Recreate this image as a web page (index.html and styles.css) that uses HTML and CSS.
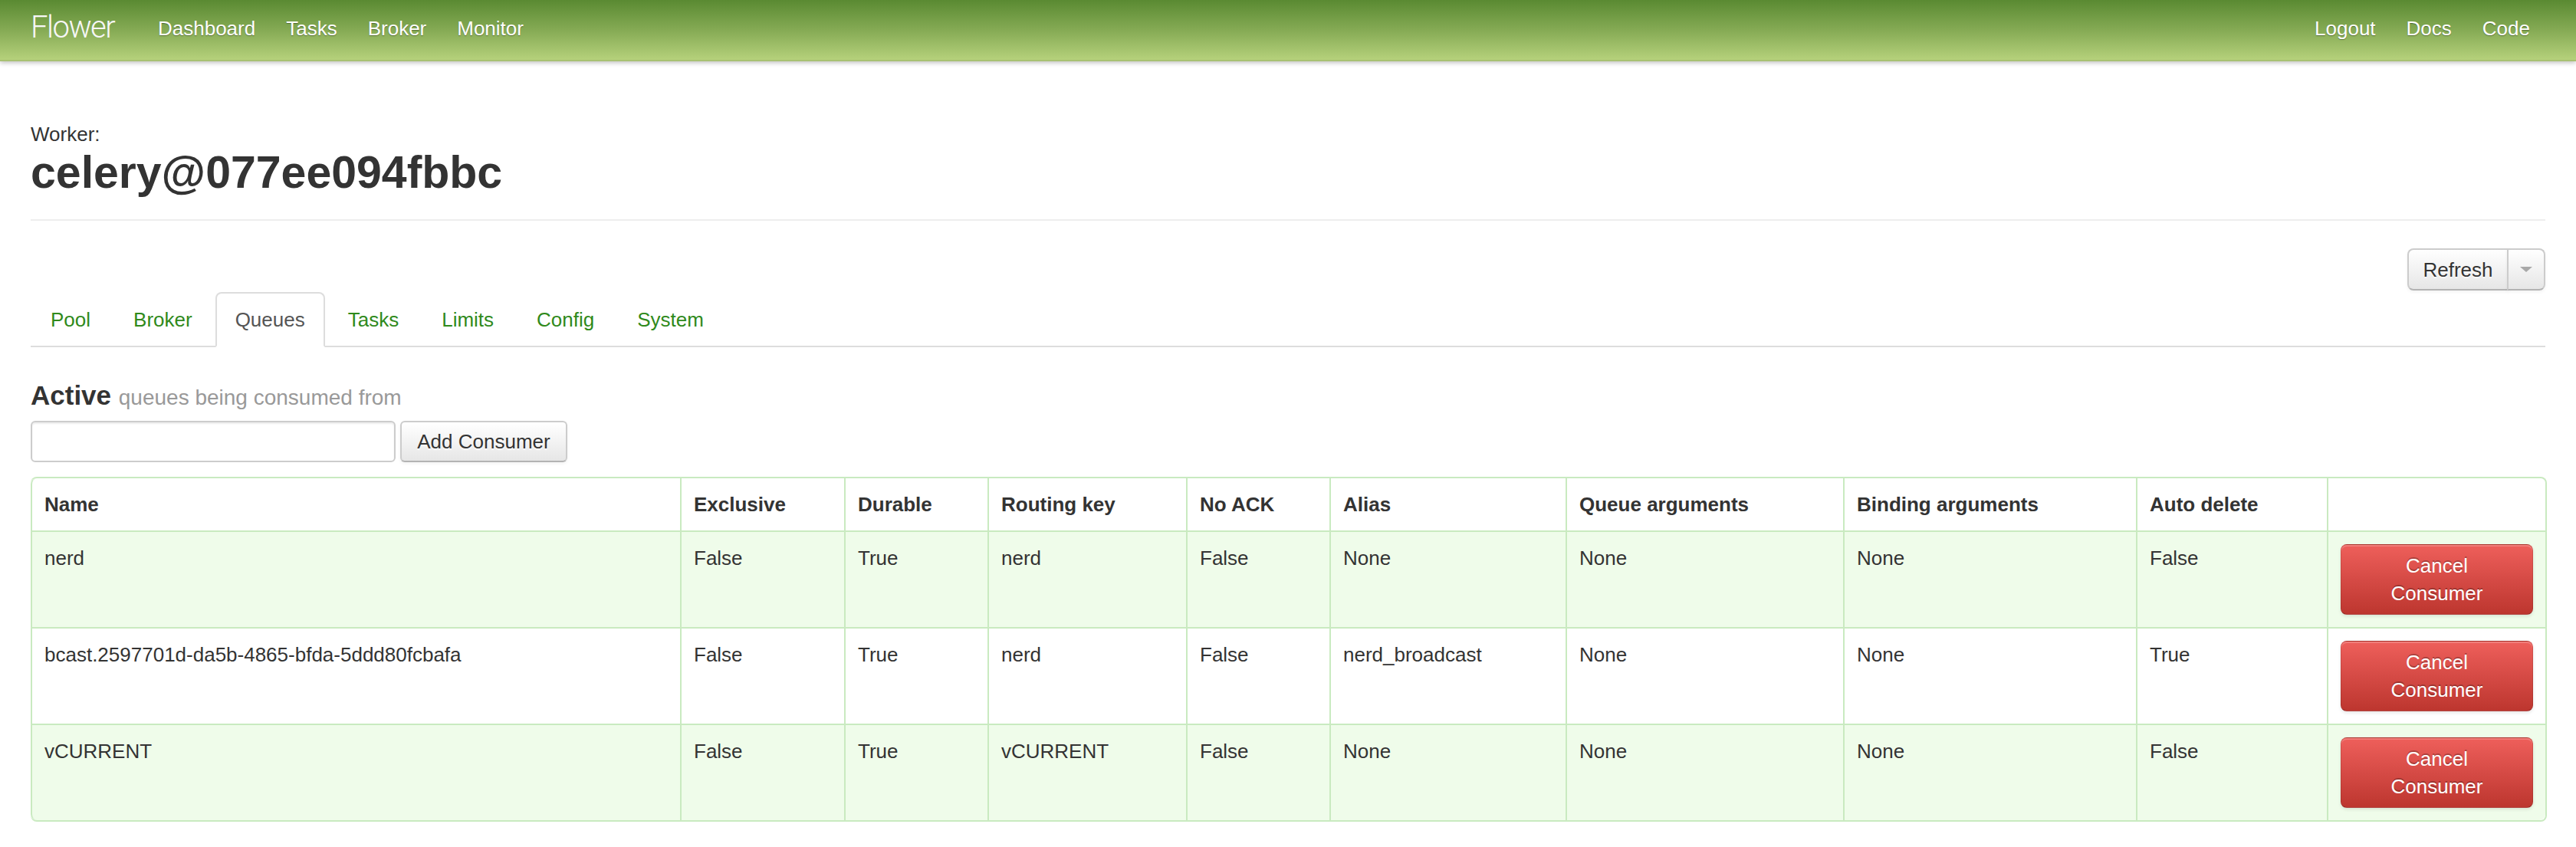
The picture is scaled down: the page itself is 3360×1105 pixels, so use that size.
FILE: index.html
```html
<!DOCTYPE html>
<html>
<head>
<meta charset="utf-8">
<title>Flower</title>
<link rel="stylesheet" href="styles.css">
</head>
<body>
<div class="navbar">
  <a class="brand" href="#">Flower</a>
  <ul class="nav">
    <li><a href="#">Dashboard</a></li>
    <li><a href="#">Tasks</a></li>
    <li><a href="#">Broker</a></li>
    <li><a href="#">Monitor</a></li>
  </ul>
  <ul class="nav nav-right">
    <li><a href="#">Logout</a></li>
    <li><a href="#">Docs</a></li>
    <li><a href="#">Code</a></li>
  </ul>
</div>

<div class="container">
  <div class="worker-label">Worker:</div>
  <h1 class="worker-name">celery@077ee094fbbc</h1>
  <hr class="divider">

  <div class="toolbar">
    <div class="btn-group">
      <button class="btn btn-main">Refresh</button>
      <button class="btn btn-toggle"><span class="caret"></span></button>
    </div>
  </div>

  <ul class="tabs">
    <li><a href="#">Pool</a></li>
    <li><a href="#">Broker</a></li>
    <li class="active"><a href="#">Queues</a></li>
    <li><a href="#">Tasks</a></li>
    <li><a href="#">Limits</a></li>
    <li><a href="#">Config</a></li>
    <li><a href="#">System</a></li>
  </ul>

  <h3 class="section-title">Active <small>queues being consumed from</small></h3>
  <div class="add-form">
    <input class="text-input" type="text">
    <button class="btn btn-add">Add Consumer</button>
  </div>

  <table class="queues">
    <colgroup>
      <col class="c-name"><col class="c-excl"><col class="c-dur"><col class="c-rk"><col class="c-ack">
      <col class="c-alias"><col class="c-qa"><col class="c-ba"><col class="c-ad"><col class="c-act">
    </colgroup>
    <thead>
      <tr>
        <th>Name</th><th>Exclusive</th><th>Durable</th><th>Routing key</th><th>No ACK</th>
        <th>Alias</th><th>Queue arguments</th><th>Binding arguments</th><th>Auto delete</th><th></th>
      </tr>
    </thead>
    <tbody>
      <tr class="tint">
        <td>nerd</td><td>False</td><td>True</td><td>nerd</td><td>False</td>
        <td>None</td><td>None</td><td>None</td><td>False</td>
        <td><button class="btn btn-danger">Cancel Consumer</button></td>
      </tr>
      <tr>
        <td>bcast.2597701d-da5b-4865-bfda-5ddd80fcbafa</td><td>False</td><td>True</td><td>nerd</td><td>False</td>
        <td>nerd_broadcast</td><td>None</td><td>None</td><td>True</td>
        <td><button class="btn btn-danger">Cancel Consumer</button></td>
      </tr>
      <tr class="tint">
        <td>vCURRENT</td><td>False</td><td>True</td><td>vCURRENT</td><td>False</td>
        <td>None</td><td>None</td><td>None</td><td>False</td>
        <td><button class="btn btn-danger">Cancel Consumer</button></td>
      </tr>
    </tbody>
  </table>
</div>
</body>
</html>
```

FILE: styles.css
```css
html, body {
  margin: 0;
  padding: 0;
  background: #fff;
}
body {
  font-family: "Liberation Sans", Arial, sans-serif;
  font-size: 26px;
  line-height: 36px;
  color: #333;
}

/* navbar */
.navbar {
  display: flex;
  align-items: flex-start;
  height: 80px;
  box-sizing: border-box;
  padding: 0 40px;
  background: linear-gradient(to bottom, #5a8a32 0%, #86ab55 50%, #b8d37d 100%);
  box-shadow: inset 0 -2px 0 rgba(0,0,0,0.08), 0 2px 6px rgba(0,0,0,0.25);
  position: relative;
}
.brand {
  display: block;
  width: 106px;
  margin-left: -40px;
  padding: 16px 40px 24px 40px;
  font-family: "Roboto", "Liberation Sans", sans-serif;
  font-weight: 300;
  font-size: 40px;
  line-height: 40px;
  letter-spacing: -1.5px;
  color: #f7f7f7;
  text-decoration: none;
  white-space: nowrap;
}
.nav {
  display: flex;
  list-style: none;
  margin: 0;
  padding: 0;
}
.nav-right {
  margin-left: auto;
}
.nav a {
  display: block;
  padding: 18px 20px 22px;
  line-height: 38px;
  color: #fff;
  text-decoration: none;
  text-shadow: 0 1px 1px rgba(0,0,0,0.35);
}

/* page */
.container {
  padding: 0 40px;
}
.worker-label {
  margin-top: 77px;
  line-height: 36px;
}
.worker-name {
  margin: 2px 0 0;
  font-size: 59px;
  line-height: 60px;
  font-weight: bold;
  color: #333;
}
.divider {
  margin: 31px 0 0;
  border: 0;
  height: 2px;
  background: #eeeeee;
}

/* buttons */
.btn {
  font-family: "Liberation Sans", Arial, sans-serif;
  font-size: 26px;
  line-height: 36px;
  color: #333;
  padding: 8px 20px;
  border: 2px solid #cccccc;
  border-bottom-color: #b3b3b3;
  border-radius: 8px;
  background: linear-gradient(to bottom, #ffffff, #e6e6e6);
  box-shadow: inset 0 2px 0 rgba(255,255,255,0.2), 0 2px 4px rgba(0,0,0,0.05);
  text-shadow: 0 2px 2px rgba(255,255,255,0.75);
  cursor: pointer;
}
.toolbar {
  display: flex;
  justify-content: flex-end;
  margin-top: 36px;
}
.btn-group {
  display: flex;
}
.btn-main {
  width: 132px;
  height: 55px;
  padding: 0;
  border-radius: 8px 0 0 8px;
}
.btn-toggle {
  width: 50px;
  height: 55px;
  padding: 0;
  margin-left: -2px;
  border-radius: 0 8px 8px 0;
  display: flex;
  align-items: center;
  justify-content: center;
}
.caret {
  display: block;
  width: 0;
  height: 0;
  border-top: 7px solid #a8a8a8;
  border-left: 8px solid transparent;
  border-right: 8px solid transparent;
}

/* tabs */
.tabs {
  display: flex;
  list-style: none;
  margin: 2px 0 36px;
  padding: 0;
  border-bottom: 2px solid #dddddd;
}
.tabs li {
  margin-right: 4px;
  margin-bottom: -2px;
}
.tabs a {
  display: block;
  padding: 16px 24px;
  line-height: 36px;
  border: 2px solid transparent;
  border-radius: 8px 8px 0 0;
  color: #2f8a1b;
  text-decoration: none;
}
.tabs .active a {
  color: #555;
  background: #fff;
  border-color: #dddddd #dddddd transparent;
}

/* active heading */
.section-title {
  margin: 0;
  font-size: 35px;
  line-height: 54px;
  font-weight: bold;
  color: #333;
}
.section-title small {
  font-size: 28px;
  font-weight: normal;
  color: #999;
}
.add-form {
  display: flex;
  gap: 6px;
  margin: 3px 0 19px;
}
.text-input {
  width: 476px;
  height: 54px;
  box-sizing: border-box;
  border: 2px solid #cccccc;
  border-radius: 6px;
  box-shadow: inset 0 2px 2px rgba(0,0,0,0.075);
  font-family: "Liberation Sans", Arial, sans-serif;
  font-size: 26px;
  padding: 8px 12px;
  margin: 0;
}
.btn-add {
  height: 54px;
  width: 218px;
  padding: 0;
  border-radius: 6px;
}

/* table */
.queues {
  width: 100%;
  table-layout: fixed;
  border-collapse: separate;
  border-spacing: 0;
  border: 2px solid #c9eac0;
  border-left: 0;
  border-radius: 8px;
}
.c-name { width: 847px; }
.c-excl { width: 214px; }
.c-dur { width: 187px; }
.c-rk { width: 259px; }
.c-ack { width: 187px; }
.c-alias { width: 308px; }
.c-qa { width: 362px; }
.c-ba { width: 382px; }
.c-ad { width: 249px; }
.c-act { width: 285px; }
.queues th,
.queues td {
  padding: 16px;
  text-align: left;
  vertical-align: top;
  line-height: 36px;
  border-left: 2px solid #c9eac0;
  border-top: 2px solid #c9eac0;
  word-wrap: break-word;
}
.queues thead th {
  border-top: 0;
  font-weight: bold;
  background: #fff;
}
.queues thead th:first-child { border-top-left-radius: 8px; }
.queues thead th:last-child { border-top-right-radius: 8px; }
.queues tbody tr:last-child td:first-child { border-bottom-left-radius: 8px; }
.queues tbody tr:last-child td:last-child { border-bottom-right-radius: 8px; }
.queues tr.tint td {
  background: #effcea;
}
.btn-danger {
  display: block;
  width: 100%;
  padding: 9px 58px 9px;
  text-align: center;
  border: 1px solid #bd362f;
  border-color: rgba(0,0,0,0.1) rgba(0,0,0,0.1) rgba(0,0,0,0.25);
  border-radius: 8px;
  background: linear-gradient(to bottom, #ee5f5b, #bd362f);
  color: #fff;
  text-shadow: 0 -2px 0 rgba(0,0,0,0.25);
  box-shadow: inset 0 2px 0 rgba(255,255,255,0.2), 0 2px 4px rgba(0,0,0,0.1);
}
```
